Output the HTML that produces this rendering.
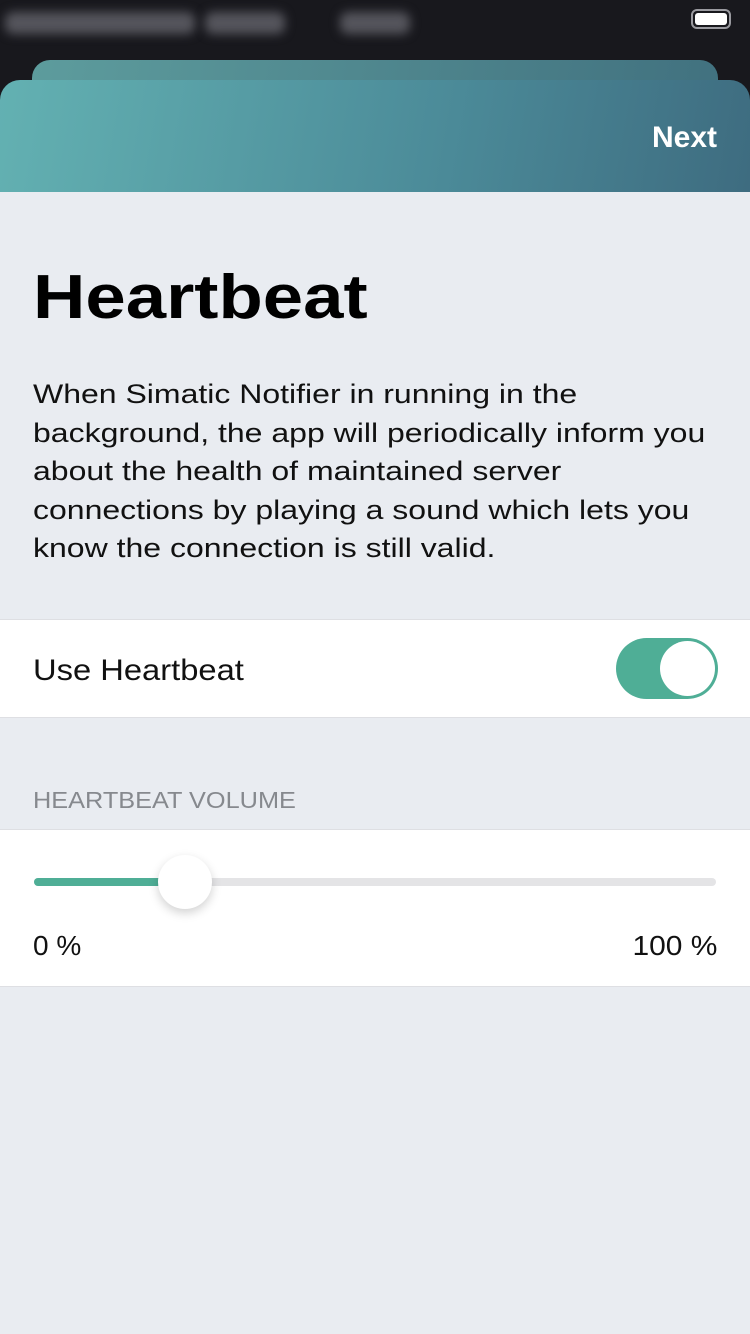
<!DOCTYPE html>
<html><head><meta charset="utf-8"><style>
body{margin:0;width:750px;height:1334px;background:#e9ecf1;font-family:"Liberation Sans",sans-serif;position:relative;overflow:hidden}
.sb{position:absolute;left:0;top:0;width:750px;height:120px;background:#18181d}
.blur{position:absolute;top:12px;height:22px;background:#55555c;filter:blur(5px);border-radius:8px}
.bat{position:absolute;left:691px;top:9px;width:40px;height:20px;border:2px solid #9a9aa0;border-radius:6px;box-sizing:border-box}
.bat i{position:absolute;left:2px;top:2px;right:2px;bottom:2px;background:#fff;border-radius:3px}
.back{position:absolute;left:32px;top:60px;width:686px;height:60px;border-radius:18px 18px 0 0;background:linear-gradient(100deg,#5d9c9d,#41717f)}
.hdr{position:absolute;left:0;top:80px;width:750px;height:112px;border-radius:20px 20px 0 0;background:linear-gradient(100deg,#63b1b2,#4b8a98 60%,#3e6c80)}
.next{position:absolute;right:33px;top:41px;color:#fff;font-size:30px;font-weight:bold}
h1{position:absolute;left:33px;top:262px;margin:0;font-size:62px;font-weight:bold;color:#000;transform:scaleX(1.17);transform-origin:left}
.p{position:absolute;left:33px;top:375px;font-size:27px;line-height:38.5px;color:#111;white-space:nowrap;transform:scaleX(1.185);transform-origin:left}
.row{position:absolute;left:0;width:750px;background:#fff;border-top:1px solid #dedfe3;border-bottom:1px solid #dedfe3}
.lbl{position:absolute;left:33px;font-size:30px;color:#111}
.tog{position:absolute;left:616px;top:18px;width:102px;height:61px;border-radius:31px;background:#4fae96}
.tog i{position:absolute;right:3px;top:3px;width:55px;height:55px;border-radius:50%;background:#fff}
.cap{position:absolute;left:33px;top:787px;font-size:23px;color:#86898e;transform:scaleX(1.1);transform-origin:left}
.track{position:absolute;left:34px;top:48px;width:682px;height:8px;border-radius:4px;background:#e4e4e6}
.fill{position:absolute;left:34px;top:48px;width:150px;height:8px;border-radius:4px;background:#4fae96}
.knob{position:absolute;left:158px;top:25px;width:54px;height:54px;border-radius:50%;background:#fff;box-shadow:0 4px 10px rgba(0,0,0,.18)}
</style></head><body>
<div class="sb"><div class="blur" style="left:5px;width:190px"></div><div class="blur" style="left:205px;width:80px"></div><div class="blur" style="left:340px;width:70px"></div><div class="bat"><i></i></div></div>
<div class="back"></div>
<div class="hdr"><div class="next">Next</div></div>
<h1>Heartbeat</h1>
<div class="p">When Simatic Notifier in running in the<br>background, the app will periodically inform you<br>about the health of maintained server<br>connections by playing a sound which lets you<br>know the connection is still valid.</div>
<div class="row" style="top:619px;height:97px"><div class="lbl" style="top:34px;transform:scaleX(1.09);transform-origin:left">Use Heartbeat</div><div class="tog"><i></i></div></div>
<div class="cap">HEARTBEAT VOLUME</div>
<div class="row" style="top:829px;height:156px"><div class="track"></div><div class="fill"></div><div class="knob"></div>
<div class="lbl" style="top:100px;font-size:28px">0 %</div><div class="lbl" style="top:100px;left:auto;right:33px;font-size:28px;transform:scaleX(1.07);transform-origin:right">100 %</div></div>
</body></html>
